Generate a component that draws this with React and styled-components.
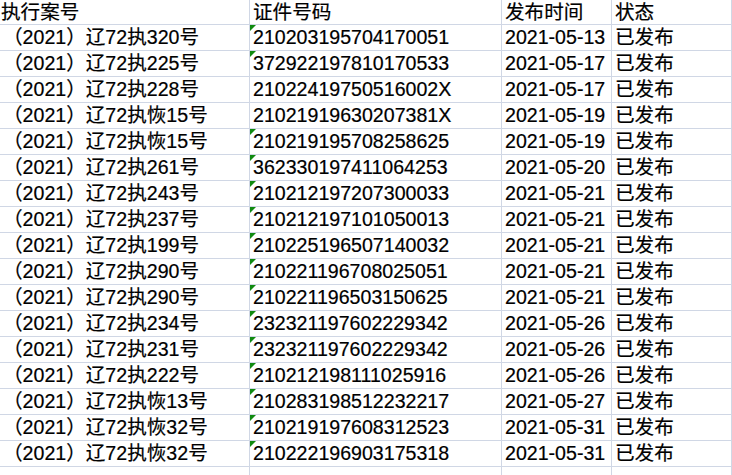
import React from 'react';
import styled, { createGlobalStyle } from 'styled-components';

const GlobalStyle = createGlobalStyle`
  html, body {
    margin: 0;
    padding: 0;
    background: #fff;
  }
`;

const Sheet = styled.div`
  display: grid;
  grid-template-columns: 250px 252px 110px 120px;
  width: 732px;
  height: 475px;
  overflow: hidden;
  font-family: "Liberation Sans", "Noto Sans CJK SC", sans-serif;
  font-size: 19.6px;
  color: #000;
  background: #fff;
  -webkit-text-stroke: 0.2px #000;
`;

const Cell = styled.div`
  position: relative;
  box-sizing: border-box;
  height: ${p => (p.$header ? 25 : 26)}px;
  line-height: ${p => (p.$header ? 24 : 25)}px;
  padding-left: ${p => p.$pad || 3}px;
  border-right: 1px solid #d0d7e5;
  border-bottom: 1px solid #d0d7e5;
  white-space: nowrap;
  overflow: hidden;
`;

const Flag = styled.span`
  position: absolute;
  left: 0;
  top: 0;
  width: 0;
  height: 0;
  border-top: 6px solid #108a10;
  border-right: 6px solid transparent;
`;

const rows = [
  ['（2021）辽72执320号', '210203195704170051', '2021-05-13'],
  ['（2021）辽72执225号', '372922197810170533', '2021-05-17'],
  ['（2021）辽72执228号', '21022419750516002X', '2021-05-17'],
  ['（2021）辽72执恢15号', '21021919630207381X', '2021-05-19'],
  ['（2021）辽72执恢15号', '210219195708258625', '2021-05-19'],
  ['（2021）辽72执261号', '362330197411064253', '2021-05-20'],
  ['（2021）辽72执243号', '210212197207300033', '2021-05-21'],
  ['（2021）辽72执237号', '210212197101050013', '2021-05-21'],
  ['（2021）辽72执199号', '210225196507140032', '2021-05-21'],
  ['（2021）辽72执290号', '210221196708025051', '2021-05-21'],
  ['（2021）辽72执290号', '210221196503150625', '2021-05-21'],
  ['（2021）辽72执234号', '232321197602229342', '2021-05-26'],
  ['（2021）辽72执231号', '232321197602229342', '2021-05-26'],
  ['（2021）辽72执222号', '210212198111025916', '2021-05-26'],
  ['（2021）辽72执恢13号', '210283198512232217', '2021-05-27'],
  ['（2021）辽72执恢32号', '210219197608312523', '2021-05-31'],
  ['（2021）辽72执恢32号', '210222196903175318', '2021-05-31'],
];

const App = () => (
  <>
    <GlobalStyle />
    <Sheet>
      <Cell $header $pad={1}>执行案号</Cell>
      <Cell $header>证件号码</Cell>
      <Cell $header>发布时间</Cell>
      <Cell $header>状态</Cell>
      {rows.map(([caseNo, idNo, date], i) => (
        <React.Fragment key={i}>
          <Cell>{caseNo}</Cell>
          <Cell>
            {!idNo.endsWith('X') && <Flag />}
            {idNo}
          </Cell>
          <Cell>{date}</Cell>
          <Cell>已发布</Cell>
        </React.Fragment>
      ))}
      <Cell />
      <Cell />
      <Cell />
      <Cell />
    </Sheet>
  </>
);

export default App;
